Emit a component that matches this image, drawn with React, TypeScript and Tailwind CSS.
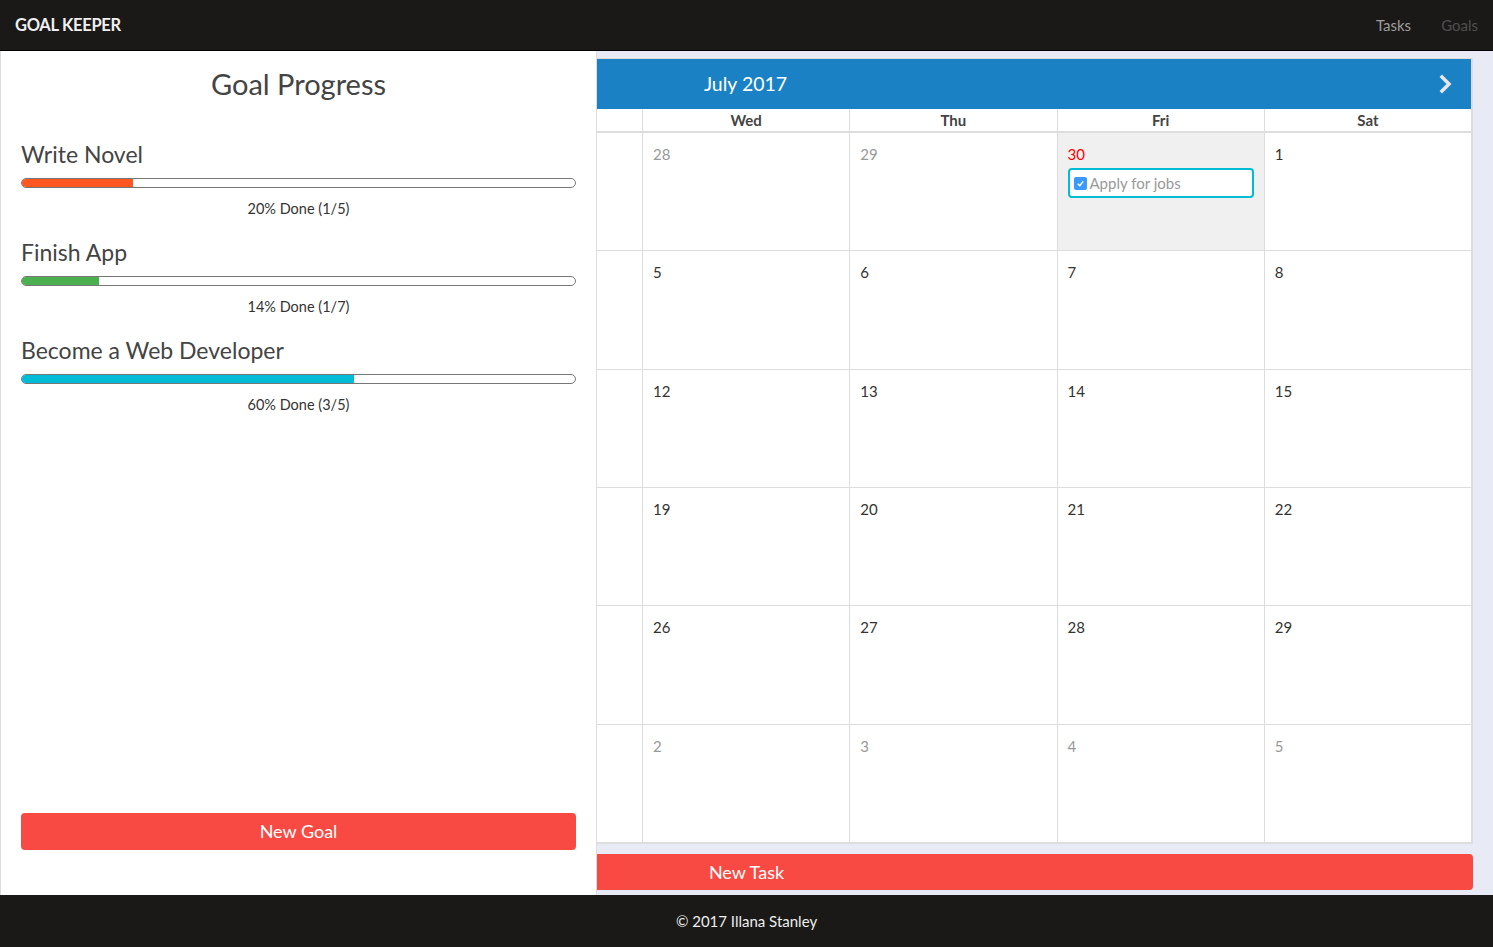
import React from "react";

const goals = [
  { name: "Write Novel", pct: 20, done: 1, total: 5, color: "bg-[#ff5722]" },
  { name: "Finish App", pct: 14, done: 1, total: 7, color: "bg-[#4caf50]" },
  { name: "Become a Web Developer", pct: 60, done: 3, total: 5, color: "bg-[#00bcd4]" },
];

type Day = { n: number; muted?: boolean; today?: boolean; task?: string };

const rows: Day[][] = [
  [{ n: 28, muted: true }, { n: 29, muted: true }, { n: 30, today: true, task: "Apply for jobs" }, { n: 1 }],
  [{ n: 5 }, { n: 6 }, { n: 7 }, { n: 8 }],
  [{ n: 12 }, { n: 13 }, { n: 14 }, { n: 15 }],
  [{ n: 19 }, { n: 20 }, { n: 21 }, { n: 22 }],
  [{ n: 26 }, { n: 27 }, { n: 28 }, { n: 29 }],
  [{ n: 2, muted: true }, { n: 3, muted: true }, { n: 4, muted: true }, { n: 5, muted: true }],
];

export default function App() {
  return (
    <div className="h-screen flex flex-col font-['Lato','Open_Sans',sans-serif] overflow-hidden">
      {/* Navbar */}
      <nav className="h-[51px] shrink-0 bg-[#1a1918] border-b border-black flex items-center justify-between pl-[15px] pr-[15px]">
        <div className="text-[#f0f0f0] font-bold text-[16.5px] tracking-[-0.3px]">GOAL KEEPER</div>
        <div className="flex gap-[30px] text-[15px]">
          <span className="text-[#9d9d9d]">Tasks</span>
          <span className="text-[#4f4f4f]">Goals</span>
        </div>
      </nav>

      <div className="flex flex-1 min-h-0">
        {/* Left panel */}
        <div className="w-[597px] shrink-0 bg-white border-l border-r border-[#ddd] flex flex-col px-[20px]">
          <h1 className="text-center text-[29px] text-[#444] mt-[15px] leading-[36px]">Goal Progress</h1>
          <div className="mt-[37px] flex flex-col">
            {goals.map((g) => (
              <div key={g.name} className="h-[98px]">
                <div className="text-[23px] text-[#444] leading-[30px]">{g.name}</div>
                <div className="mt-[9px] h-[10px] rounded-full border border-[#777] overflow-hidden bg-white">
                  <div className={`h-full ${g.color}`} style={{ width: `${g.pct}%` }} />
                </div>
                <div className="text-center text-[14.5px] text-[#333] mt-[11px] leading-[20px]">
                  {g.pct}% Done ({g.done}/{g.total})
                </div>
              </div>
            ))}
          </div>
          <div className="flex-1" />
          <button className="h-[37px] mb-[45px] w-full rounded-[4px] bg-[#f84a43] text-white text-[18px]">
            New Goal
          </button>
        </div>

        {/* Right panel */}
        <div className="flex-1 bg-[#e8eaf6] flex flex-col pt-[7px] pr-[20px]">
          <div className="flex-1 flex flex-col bg-white border-t border-r-2 border-b-2 border-[#ddd]">
            <div className="h-[50px] bg-[#1a82c4] flex items-center shrink-0">
              <div className="w-[297px] text-center text-white text-[19.5px]">July 2017</div>
              <div className="flex-1" />
              <svg width="14" height="20" viewBox="0 0 14 20" className="mr-[18px]">
                <polyline points="3,3 10,10 3,17" fill="none" stroke="#e6e6e6" strokeWidth="3.5" strokeLinecap="square" />
              </svg>
            </div>
            <div className="flex h-[24px] border-b-2 border-[#ddd] shrink-0 text-[15px] font-bold text-[#444]">
              <div className="w-[45px] shrink-0" />
              {["Wed", "Thu", "Fri", "Sat"].map((d) => (
                <div key={d} className="flex-1 border-l border-[#ddd] text-center leading-[22px]">{d}</div>
              ))}
            </div>
            <div className="flex-1 flex flex-col">
              {rows.map((r, i) => (
                <div key={i} className={`flex-1 flex ${i > 0 ? "border-t border-[#ddd]" : ""}`}>
                  <div className="w-[45px] shrink-0" />
                  {r.map((d, j) => (
                    <div
                      key={j}
                      className={`flex-1 border-l border-[#ddd] px-[10px] pt-[11px] text-[15px] ${d.today ? "bg-[#f0f0f0]" : ""}`}
                    >
                      <div
                        className={`leading-[20px] ${d.today ? "text-[#f00]" : d.muted ? "text-[#999]" : "text-[#333]"}`}
                      >
                        {d.n}
                      </div>
                      {d.task && (
                        <div className="mt-[4px] h-[30px] border-2 border-[#00bcd4] rounded-[4px] bg-white flex items-center pl-[4px]">
                          <span className="w-[13px] h-[13px] rounded-[2px] bg-[#3b99fc] flex items-center justify-center mr-[3px]">
                            <svg width="9" height="9" viewBox="0 0 10 10">
                              <polyline points="2,5.2 4.2,7.4 8,2.6" fill="none" stroke="white" strokeWidth="1.6" />
                            </svg>
                          </span>
                          <span className="text-[#999] text-[15px]">{d.task}</span>
                        </div>
                      )}
                    </div>
                  ))}
                </div>
              ))}
            </div>
          </div>
          <button className="mt-[10px] mb-[5px] h-[36px] shrink-0 bg-[#f84a43] rounded-r-[4px] text-white text-[18px] text-left">
            <span className="block w-[299px] text-center">New Task</span>
          </button>
        </div>
      </div>

      {/* Footer */}
      <footer className="h-[52px] shrink-0 bg-[#1a1918] flex items-center justify-center text-[#eee] text-[15px]">
        © 2017 Illana Stanley
      </footer>
    </div>
  );
}
